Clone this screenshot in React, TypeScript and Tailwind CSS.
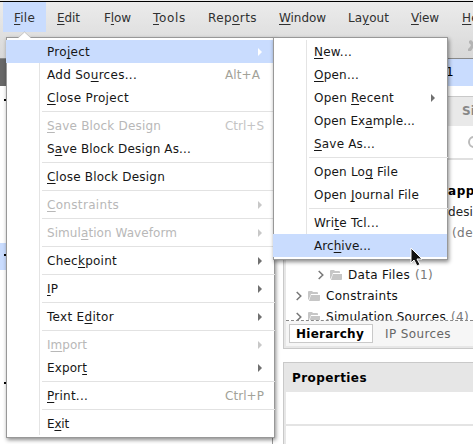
import React from "react";

type Item = { t: string; w: number; key?: string; arrow?: boolean; off?: boolean; on?: boolean; sep?: boolean };

// An underscore precedes the mnemonic letter.
const mainItems: Item[] = [
  { t: "Pro_ject", w: 43, arrow: true, on: true },
  { t: "Add So_urces...", w: 90, key: "Alt+A" },
  { t: "_Close Project", w: 82 },
  { t: "_Save Block Design", w: 114, key: "Ctrl+S", off: true, sep: true },
  { t: "S_ave Block Design As...", w: 144 },
  { t: "_Close Block Design", w: 118, sep: true },
  { t: "_Constraints", w: 72, arrow: true, off: true, sep: true },
  { t: "Simul_ation Waveform", w: 130, arrow: true, off: true, sep: true },
  { t: "Chec_kpoint", w: 70, arrow: true, sep: true },
  { t: "_IP", w: 11, arrow: true, sep: true },
  { t: "Text E_ditor", w: 67, arrow: true, sep: true },
  { t: "I_mport", w: 40, arrow: true, off: true, sep: true },
  { t: "Expor_t", w: 40, arrow: true },
  { t: "_Print...", w: 41, key: "Ctrl+P", sep: true },
  { t: "E_xit", w: 22, sep: true },
];
const subItems: Item[] = [
  { t: "_New...", w: 38 },
  { t: "_Open...", w: 45 },
  { t: "Open _Recent", w: 80, arrow: true },
  { t: "Open Ex_ample...", w: 101 },
  { t: "_Save As...", w: 61 },
  { t: "Open Lo_g File", w: 84, sep: true },
  { t: "Open _Journal File", w: 105 },
  { t: "Wri_te Tcl...", w: 65, sep: true },
  { t: "Arc_hive...", w: 57, on: true },
];

function Label({ t, w }: { t: string; w: number }) {
  const i = t.indexOf("_");
  const ref = React.useRef<HTMLSpanElement>(null);
  React.useLayoutEffect(() => {
    const el = ref.current;
    if (!el) return;
    el.style.letterSpacing = "0px";
    const n = t.replace("_", "").length;
    el.style.letterSpacing = `${(w - el.getBoundingClientRect().width) / n}px`;
  }, [t, w]);
  return (
    <span ref={ref} className="block w-fit whitespace-pre pt-[2px]">
      {i < 0 ? t : <>{t.slice(0, i)}<span className="underline decoration-1 underline-offset-2">{t[i + 1]}</span>{t.slice(i + 2)}</>}
    </span>
  );
}

function Menu({ items, className }: { items: Item[]; className: string }) {
  return (
    <div className={`absolute border border-[#989898] bg-white py-[2px] shadow-[1px_2px_4px_rgba(0,0,0,0.45)] ${className}`}>
      {items.map((m) => (
        <React.Fragment key={m.t}>
          {m.sep && (
            <div className="-mr-px flex h-[5px] pl-8">
              <div className="w-px bg-[#e4e4e4]" />
              <div className="mt-[2px] ml-[2px] h-px flex-1 bg-[#e2e2e2]" />
            </div>
          )}
          <div className={`flex h-[23px] items-center ${m.on ? "-ml-px bg-[#c9dcfe] pl-[34px]" : "pl-8"} ${m.off ? "text-[#b8b8b8]" : "text-[#161616]"}`}>
            {!m.on && <div className="h-full w-px bg-[#e4e4e4]" />}
            <span className="ml-[7px] flex-1"><Label t={m.t} w={m.w} /></span>
            {m.key && <span className={`${m.key === "Alt+A" ? "mr-[14px]" : "mr-[10px]"} ${m.off ? "text-[#c4c4c4]" : "text-[#a2a298]"}`}><Label t={m.key} w={m.key === "Alt+A" ? 35 : 39} /></span>}
            {m.arrow && (
              <svg className={`mr-[12px] ${m.on ? "text-white" : m.off ? "text-[#c8c8c8]" : "text-[#707070]"}`} width="4" height="8" viewBox="0 0 4 8"><path d="M0 0L4 4L0 8Z" fill="currentColor" /></svg>
            )}
          </div>
        </React.Fragment>
      ))}
    </div>
  );
}

function TreeRow({ name, w, count, className }: { name: string; w: number; count?: string; className: string }) {
  return (
    <div className={`flex h-[21px] shrink-0 items-center ${className}`}>
      <svg width="6" height="10" viewBox="0 0 6 10" fill="none" stroke="#777" strokeWidth="1.5"><path d="M.7 1L4.8 5L.7 9" /></svg>
      <svg className="ml-[6px]" width="12" height="10" viewBox="0 0 12 10" fill="#c6c6c6"><path d="M0 1Q0 0 1 0H4L5 1H9Q10 1 10 2V3H3L1 8V9L0 8Z" /><path d="M3 4H12V9Q12 10 11 10H1Z" /></svg>
      <span className="ml-[6px] text-[#111]"><Label t={name} w={w} /></span>
      {count && <span className="ml-[5px] text-[#777]"><Label t={count} w={18} /></span>}
    </div>
  );
}

const bar: [string, number, string][] = [
  ["_File", 21, "w-[43px]"], ["_Edit", 23, "w-[47px]"], ["F_low", 27, "w-[49px]"], ["_Tools", 33, "w-[55px]"], ["Rep_orts", 49, "w-[71px]"],
  ["_Window", 47, "w-[69px]"], ["La_yout", 41, "w-[63px]"], ["_View", 28, "w-[51px]"], ["_He", 17, "w-[30px]"],
];

export default function App() {
  return (
    <div className="relative flex h-[444px] w-[473px] flex-col overflow-hidden bg-white text-[12px] leading-[15px] font-['DejaVu_Sans',sans-serif]">
      <header className="flex h-[58px] shrink-0 flex-col bg-linear-to-b from-[#ececec] to-[#d8d8d8]">
        <div className="mt-px h-px shrink-0 bg-black" />
        <nav className="flex h-[30px] pl-[3px] text-[#303030]">
          {bar.map(([t, w, c], i) => (
            <div key={t} className={`flex shrink-0 items-center pl-[11px] ${c} ${i === 0 ? "bg-[#c9dcfe]" : ""}`}><Label t={t} w={w} /></div>
          ))}
        </nav>
        <svg className="mt-[7px] self-end" width="5" height="13" viewBox="0 0 5 13" fill="#b4b4b4"><path d="M1 2L3 1L5 3V9L3 12H0V10L2 8L3 6L1 4Z" /></svg>
      </header>
      <div className="flex h-7 shrink-0 border-t border-[#888]">
        <div className="w-[283px] bg-[#686868]" />
        <div className="flex flex-1 items-center bg-[#c9dcfe] pl-[163px]">1</div>
      </div>
      <div className="flex flex-1">
        <aside className="flex w-[273px] flex-col border-r border-[#999]">
          <div className="flex h-[157px] flex-col pt-[13px] pl-1"><i className="h-[2px] w-[2px] bg-black" /></div>
          <div className="h-[27px] bg-[#c9dcfe] pt-[11px] pl-1"><i className="block h-[2px] w-[2px] bg-black" /></div>
          <div className="pt-[112px] pl-1"><i className="block h-[2px] w-[2px] bg-black" /></div>
        </aside>
        <main className="ml-[10px] flex w-[190px] flex-col pt-[10px]">
          <section className="flex h-[253px] flex-col border-y border-l border-[#c9c9c9] shadow-[inset_2px_0_#e7e7e7]">
            <div className="ml-[2px] flex h-[29px] shrink-0 items-center bg-[#e9e9e9] pl-[169px]">
              <div className="h-[23px] w-px bg-[#bbb]" /><span className="ml-[7px] font-bold text-[#888]">Si</span>
            </div>
            <div className="ml-[2px] flex h-[34px] shrink-0 items-center border-b-2 border-[#e0e0e0] pl-[162px]">
              <div className="h-3 w-px bg-[#888]" /><div className="ml-[11px] h-5 w-px bg-[#ccc]" /><div className="ml-[9px] h-3 w-3 shrink-0 rounded-full border-2 border-[#bbb]" />
            </div>
            <div className="ml-[2px] flex h-[161px] shrink-0 flex-col overflow-hidden border-b border-dashed border-[#888] pt-[20px]">
              <div className="flex h-[21px] shrink-0 items-center pl-[162px] font-bold"><Label t="app" w={27} /></div>
              <div className="flex h-[21px] shrink-0 items-center pl-[162px] text-[#222]"><Label t="desi" w={25} /></div>
              <div className="flex h-[21px] shrink-0 items-center pl-[166px] text-[#777]"><Label t="(de" w={21} /></div>
              <div className="h-[21px] shrink-0" />
              <TreeRow name="Data Files" w={62} count="(1)" className="pl-8" />
              <TreeRow name="Constraints" w={72} className="pl-[10px]" />
              <TreeRow name="Simulation Sources" w={120} count="(4)" className="pl-[10px]" />
            </div>
            <div className="ml-[2px] flex flex-1 border-b-2 border-[#e7e7e7] bg-[#f6f6f6] pt-[3px] pl-[3px]">
              <div className="flex h-[19px] w-[84px] items-center border border-[#c9c9c9] bg-white pl-[6px] font-bold"><Label t="Hierarchy" w={68} /></div>
              <span className="mt-px ml-3 text-[#666]"><Label t="IP Sources" w={66} /></span>
            </div>
          </section>
          <section className="mt-[13px] flex flex-1 flex-col border-t border-l border-[#c9c9c9] shadow-[inset_2px_0_#e7e7e7]">
            <div className="flex h-[29px] items-center bg-[#e6e6e6] pl-2 font-bold"><Label t="Properties" w={75} /></div>
            <div className="ml-[2px] h-[34px] border-b-2 border-[#e4e4e4]" />
          </section>
        </main>
      </div>
      <Menu items={mainItems} className="top-[37px] left-[6px] w-[269px]" />
      <svg className="absolute top-[31px] left-[17px]" width="15" height="7" viewBox="0 0 15 7"><path d="M1 7L7.5 1L14 7" fill="white" stroke="#aaa" strokeWidth=".6" /></svg>
      <Menu items={subItems} className="top-[37px] left-[273px] w-[175px]" />
      <svg className="absolute top-[247px] left-[410px]" width="13" height="21" viewBox="0 0 13 21"><path d="M1 1V16L4 13L7 19L10 17.5L7 12H12Z" fill="#111" stroke="white" strokeWidth="1" /></svg>
    </div>
  );
}
